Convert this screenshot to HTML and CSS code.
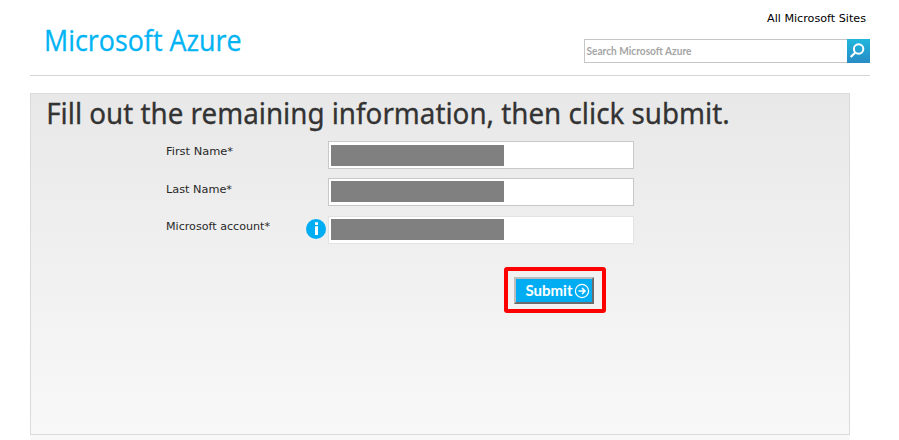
FILE: index.html
```html
<!DOCTYPE html>
<html lang="en">
<head>
<meta charset="utf-8">
<title>Microsoft Azure</title>
<link rel="stylesheet" href="styles.css">
</head>
<body>
<header class="header">
  <svg class="logo" width="300" height="60"><text x="14" y="39" textLength="197.5" lengthAdjust="spacingAndGlyphs">Microsoft Azure</text></svg>
  <div class="tools">
    <svg class="sites" width="110" height="18"><text x="7" y="14" textLength="99" lengthAdjust="spacingAndGlyphs">All Microsoft Sites</text></svg>
    <div class="search">
      <div class="search-field"><svg width="200" height="22"><text x="1.5" y="15" textLength="105" lengthAdjust="spacingAndGlyphs">Search Microsoft Azure</text></svg></div>
      <div class="search-button"><svg width="23" height="24" fill="none" stroke="#fff"><circle cx="11.6" cy="10" r="4.7" stroke-width="2"/><path d="M8.3 13.5L3.7 18" stroke-width="2.2"/></svg></div>
    </div>
  </div>
</header>
<main class="panel">
  <svg class="title" width="720" height="40"><text x="15.2" y="30" textLength="683.5" lengthAdjust="spacingAndGlyphs">Fill out the remaining information, then click submit.</text></svg>
  <div class="row">
    <svg class="label" width="140" height="28"><text x="0" y="14" textLength="67" lengthAdjust="spacingAndGlyphs">First Name*</text></svg>
    <span class="info"></span>
    <div class="field"><div class="mask"></div></div>
  </div>
  <div class="row second">
    <svg class="label" width="140" height="28"><text x="0" y="15" textLength="66" lengthAdjust="spacingAndGlyphs">Last Name*</text></svg>
    <span class="info"></span>
    <div class="field"><div class="mask"></div></div>
  </div>
  <div class="row third">
    <svg class="label" width="140" height="28"><text x="0" y="14" textLength="104" lengthAdjust="spacingAndGlyphs">Microsoft account*</text></svg>
    <span class="info"><svg width="20" height="20"><circle cx="10" cy="10" r="10" fill="#00adf3"/><path d="M9 3.3h3v2.6H9zM9 7.3h3V16H9z" fill="#fff"/></svg></span>
    <div class="field"><div class="mask"></div></div>
  </div>
  <div class="highlight">
    <div class="submit"><svg width="76" height="23"><text x="9.5" y="17" textLength="47" lengthAdjust="spacingAndGlyphs">Submit</text><g fill="none" stroke="#fff"><circle cx="66" cy="12" r="6.6" stroke-width="1.2"/><path d="M62.5 12h6M66 9l3 3-3 3" stroke-width="1.6"/></g></svg></div>
  </div>
</main>
<div class="below"></div>
</body>
</html>
```
FILE: styles.css
```css
* { box-sizing: border-box; }
body { margin: 0; width: 899px; height: 440px; overflow: hidden; background: #fff; }
svg { display: block; }

.header {
  display: flex;
  justify-content: space-between;
  width: 840px;
  height: 76px;
  margin-left: 30px;
  border-bottom: 1px solid #d5d5d5;
}
.logo { margin-top: 12px; fill: #00b4f4; stroke: #00b4f4; stroke-width: 0.3px; font: 29.5px "Open Sans", sans-serif; }
.tools { display: flex; flex-direction: column; align-items: flex-end; padding-top: 8px; }
.sites { fill: #000; font: 11px "DejaVu Sans", sans-serif; }
.search { display: flex; margin-top: 13px; }
.search-field { width: 263px; height: 24px; border: 1px solid #c6c6c6; border-right: 0; }
.search-field text { fill: #a5a5a5; font: bold 10.5px Lato, sans-serif; }
.search-button { width: 23px; height: 24px; background: linear-gradient(#20b7dd, #288bc4); }

.panel {
  width: 820px;
  height: 342px;
  margin: 17px 0 0 30px;
  border: 1px solid #dadada;
  background: linear-gradient(#e8e8e8, #f8f8f8);
}
.title { fill: #333; stroke: #333; stroke-width: 0.3px; font: 28.5px "Noto Sans", sans-serif; }
.row { display: flex; height: 28px; margin: 7px 0 0 135px; }
.second { margin-top: 9px; }
.third { margin-top: 10px; }
.label { fill: #282828; font: 10.5px "DejaVu Sans", sans-serif; }
.info { width: 22px; padding-top: 3px; }
.field { width: 306px; height: 28px; padding: 3px 2px; border: 1px solid #c8c8c8; background: #fff; }
.second .field, .third .field { padding-top: 2px; }
.third .field { border-color: #e3e3e3; }
.mask { width: 173px; height: 21px; background: #808080; }
.highlight {
  width: 102px;
  height: 46px;
  margin: 23px 0 0 473px;
  padding: 6px;
  border: 4px solid #f00;
  border-radius: 3px;
}
.submit {
  width: 80px;
  height: 27px;
  border: 2px solid;
  border-color: #bdbdbd #6b6b6b #6b6b6b #bdbdbd;
  background: #00adf3;
}
.submit text { fill: #fff; font: bold 14.5px Lato, sans-serif; }
.below { width: 820px; height: 5px; margin-left: 30px; background: #f8f8f8; }
```
